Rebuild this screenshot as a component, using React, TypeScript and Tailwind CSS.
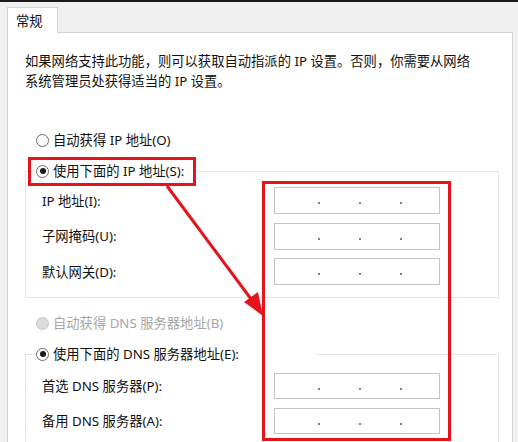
import React from "react";

const font = "font-['Noto_Sans','Noto_Sans_CJK_SC',sans-serif]";

function Radio({ checked = false, disabled = false }: { checked?: boolean; disabled?: boolean }) {
    return (
        <span
            className={`flex h-[13px] w-[13px] shrink-0 items-center justify-center rounded-full border ${
                disabled ? "border-[#c8c8c8] bg-[#dcdcdc]" : "border-[#6b6b6b] bg-white"
            }`}
        >
            {checked && <span className="h-[6px] w-[6px] rounded-full bg-[#1a1a1a]" />}
        </span>
    );
}

function IpBox({ h = "h-[27px]" }: { h?: string }) {
    return (
        <div className={`flex w-[166px] ${h} items-center border border-[#c4c4c4] bg-white pl-[43px] pt-[5px] gap-[39px]`}>
            <span className="h-[2px] w-[2px] rounded-full bg-[#555]" />
            <span className="h-[2px] w-[2px] rounded-full bg-[#555]" />
            <span className="h-[2px] w-[2px] rounded-full bg-[#555]" />
        </div>
    );
}

function Row({ label, h }: { label: string; h?: string }) {
    return (
        <div className="flex items-center justify-between pl-[16px] pr-[58px]">
            <span>{label}</span>
            <IpBox h={h} />
        </div>
    );
}

export default function App() {
    return (
        <div className={`relative h-[442px] w-[518px] overflow-hidden bg-[#f0f0f0] text-[13.3px] leading-[20px] text-[#111] ${font}`}>
            <div className="h-[2px] bg-[#1a1a1a]" />

            {/* Tab strip */}
            <div className="flex h-[30px] items-end pl-[7px]">
                <div className="relative z-10 -mb-px flex h-[26px] w-[51px] items-center border border-b-0 border-[#d4d4d4] bg-white pl-[8px] pt-[1px]">
                    常规
                </div>
            </div>

            {/* Panel */}
            <div className="ml-[7px] h-[420px] w-[506px] border border-[#d4d4d4] bg-white">
                <p className="mt-[18px] pl-[17px]">
                    如果网络支持此功能，则可以获取自动指派的 IP 设置。否则，你需要从网络
                    <br />
                    系统管理员处获得适当的 IP 设置。
                </p>

                <div className="mt-[39px] flex h-[20px] items-center gap-[4px] pl-[28px]">
                    <Radio />
                    <span>自动获得 IP 地址(O)</span>
                </div>

                <fieldset className="ml-[17px] mt-[11px] h-[137px] w-[474px] border border-[#e3e3e3]">
                    <legend className="ml-[10px] flex h-[20px] w-[160px] items-center gap-[4px] bg-white">
                        <Radio checked />
                        <span>使用下面的 IP 地址(S):</span>
                    </legend>
                    <div className="mt-[6px] flex flex-col gap-[8.5px]">
                        <Row label="IP 地址(I):" />
                        <Row label="子网掩码(U):" />
                        <Row label="默认网关(D):" />
                    </div>
                </fieldset>

                <div className="mt-[15px] flex h-[20px] items-center gap-[4px] pl-[28px] text-[#a6a6a6]">
                    <Radio disabled />
                    <span>自动获得 DNS 服务器地址(B)</span>
                </div>

                <fieldset className="ml-[17px] mt-[11px] h-[140px] w-[474px] border border-[#e3e3e3]">
                    <legend className="ml-[10px] flex h-[20px] w-[280px] items-center gap-[4px] bg-white">
                        <Radio checked />
                        <span>使用下面的 DNS 服务器地址(E):</span>
                    </legend>
                    <div className="mt-[9px] flex flex-col gap-[9px]">
                        <Row label="首选 DNS 服务器(P):" h="h-[26px]" />
                        <Row label="备用 DNS 服务器(A):" h="h-[26px]" />
                    </div>
                </fieldset>
            </div>

            {/* Annotation overlay */}
            <div className="absolute left-[28px] top-[157px] h-[29px] w-[168px] border-[3px] border-[#e5141c]" />
            <div className="absolute left-[262px] top-[181px] h-[260px] w-[189px] border-[3px] border-[#e5141c]" />
            <svg className="absolute left-0 top-0" width="518" height="442" viewBox="0 0 518 442">
                <line x1="167" y1="186" x2="254" y2="303" stroke="#e5141c" strokeWidth="3" />
                <polygon points="263,316 244,302 258,292" fill="#e5141c" />
            </svg>
        </div>
    );
}
